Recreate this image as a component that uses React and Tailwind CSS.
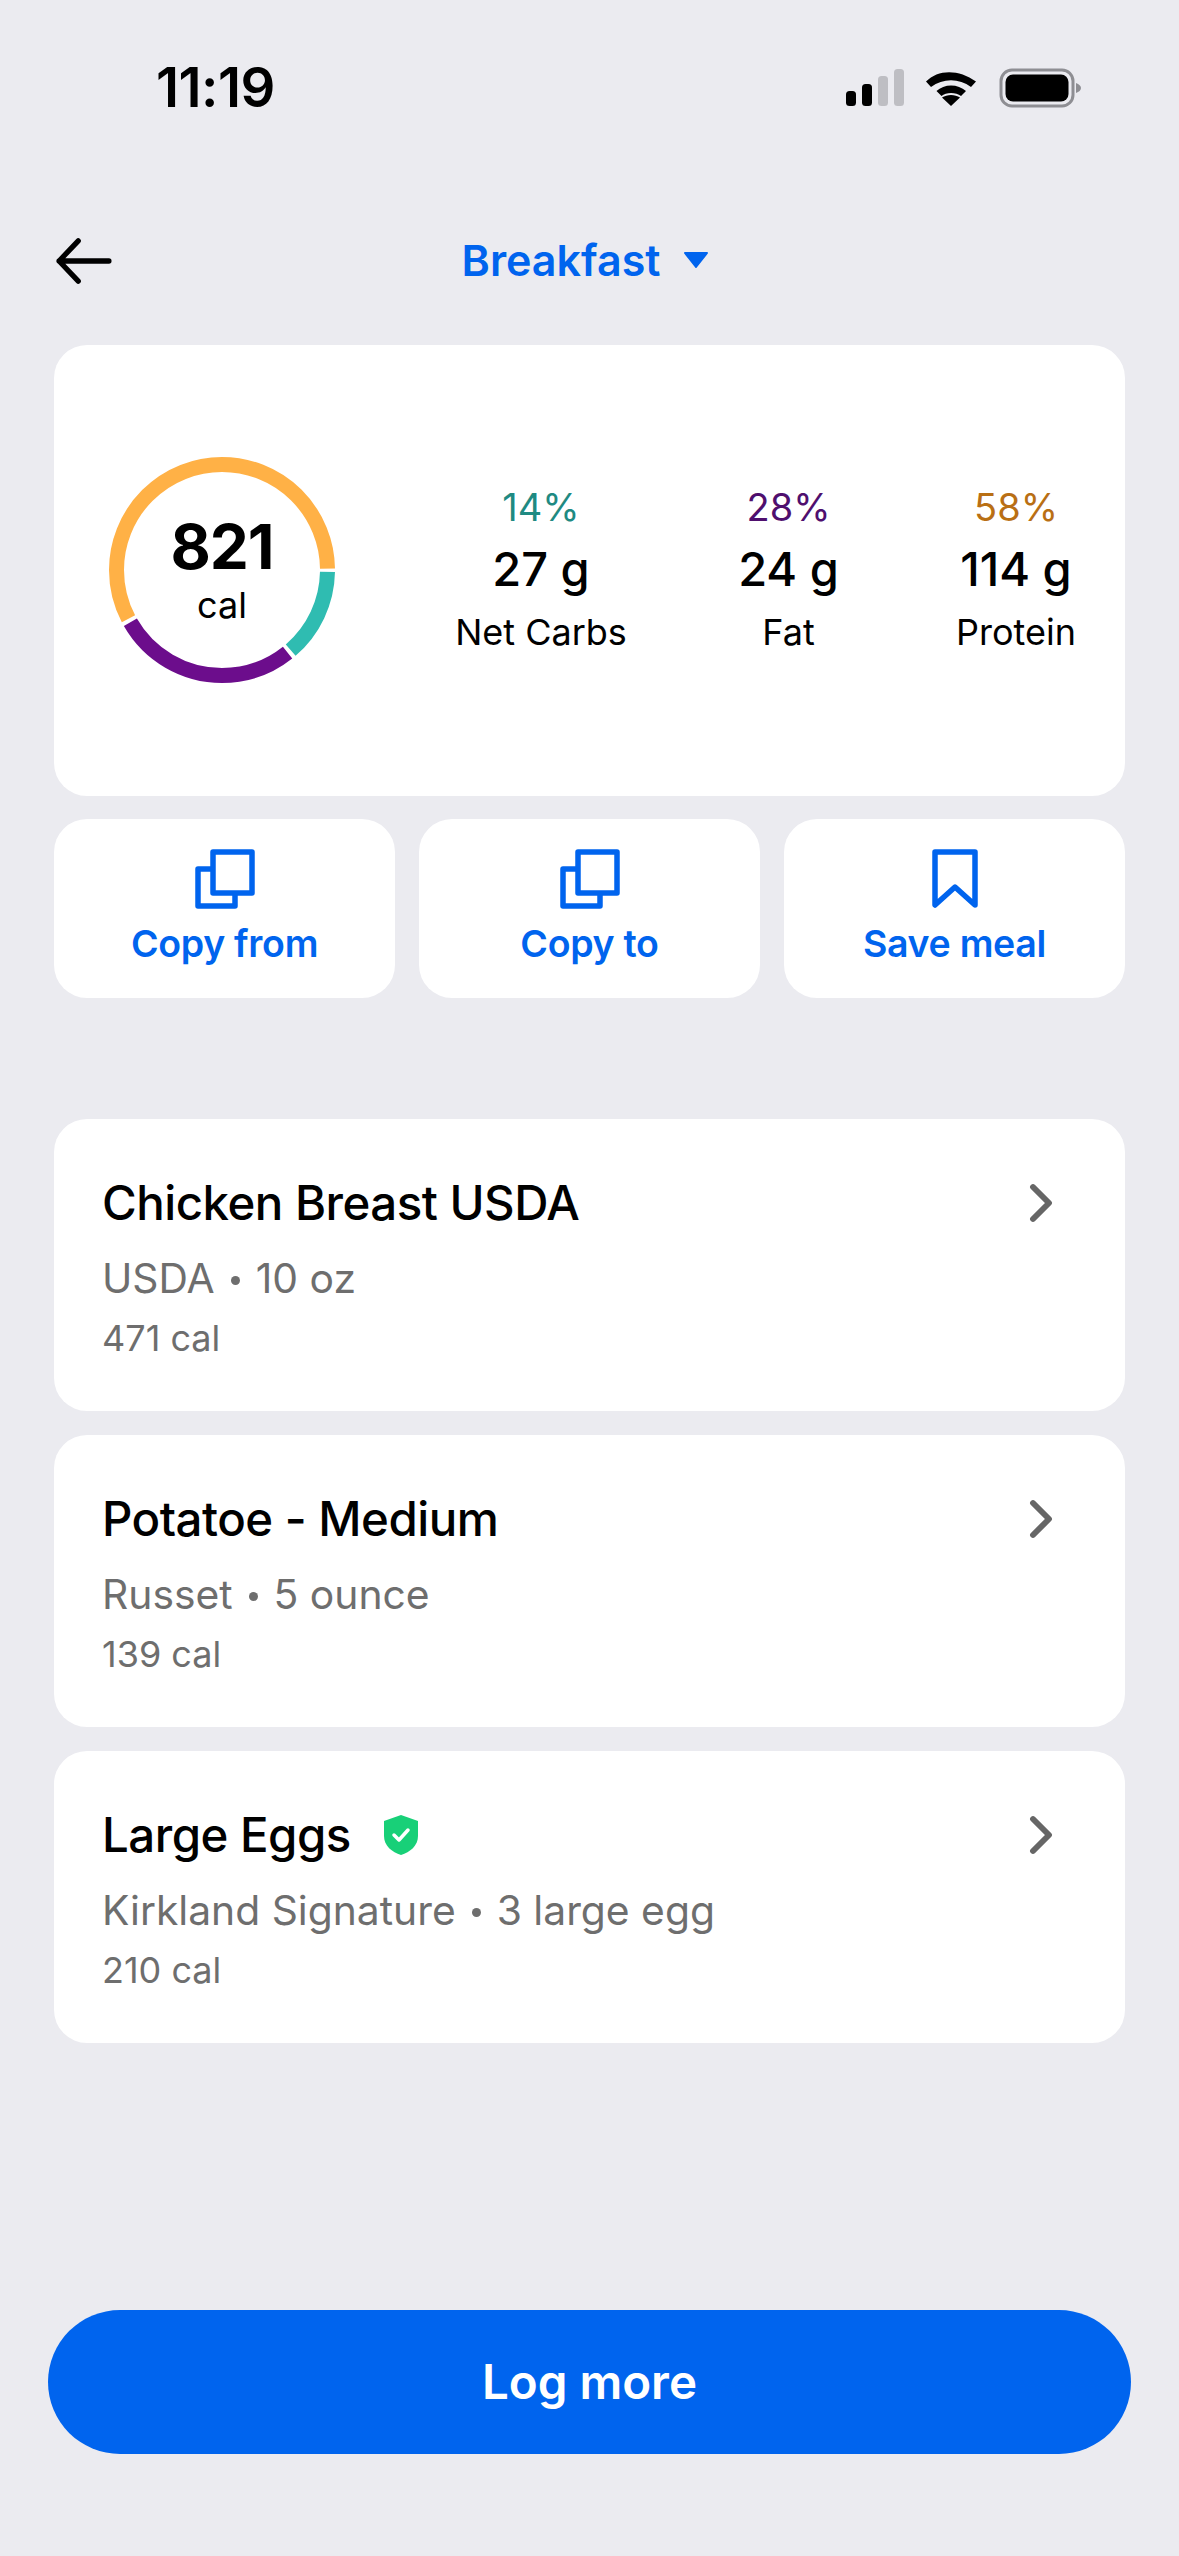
import { ChevronRight } from 'lucide-react';

const macros = [
  { pct: '14%', grams: '27 g', label: 'Net Carbs', color: 'text-[#1f8a82]', width: 'w-[170px]' },
  { pct: '28%', grams: '24 g', label: 'Fat', color: 'text-[#4f0f6e]', width: 'w-[120px]' },
  { pct: '58%', grams: '114 g', label: 'Protein', color: 'text-[#b96f14]', width: 'w-[130px]' },
];

const foods = [
  { name: 'Chicken Breast USDA', brand: 'USDA', amount: '10 oz', cal: '471 cal' },
  { name: 'Potatoe - Medium', brand: 'Russet', amount: '5 ounce', cal: '139 cal' },
  { name: 'Large Eggs', brand: 'Kirkland Signature', amount: '3 large egg', cal: '210 cal', verified: true },
];

function StatusIcons() {
  return (
    <svg width="236" height="40" viewBox="0 0 236 40" fill="none">
      <rect x="0" y="23" width="10" height="15" rx="3.5" fill="#000" />
      <rect x="16" y="16" width="10" height="22" rx="3.5" fill="#000" />
      <rect x="32" y="8" width="10" height="30" rx="3.5" fill="#bebec3" />
      <rect x="48" y="1" width="10" height="37" rx="3.5" fill="#bebec3" />
      <path d="M80 14.5C92 2 113 2 130 14.5L125 20C113 11 97 11 85 20Z" fill="#000" transform="translate(0 -1)" />
      <path d="M90.5 24C98 16.5 112 16.5 120 24L115 29C110 25 100 25 95.500 29Z" fill="#000" transform="translate(0 -1)" />
      <path d="M105 38L96 29.500C101 26 109 26 114 29.500Z" fill="#000" />
      <rect x="155" y="2" width="72" height="36" rx="11" stroke="#8e8e93" strokeWidth="3" />
      <rect x="159.500" y="6.500" width="63" height="27" rx="7.500" fill="#000" />
      <path d="M230 15C233 16 235 18 235 20C235 22 233 24 230 25Z" fill="#8e8e93" />
    </svg>
  );
}

function Ring() {
  const size = 226;
  const r = 105.5;
  const c = 2 * Math.PI * r;
  const segs = [
    { color: '#2fbcb1', start: 0, share: 0.14 },
    { color: '#6c0d8c', start: 0.14, share: 0.28 },
    { color: '#ffb146', start: 0.42, share: 0.58 },
  ];
  return (
    <div className="relative w-[226px] h-[226px] shrink-0 mt-[-2px]">
      <svg width={size} height={size} viewBox="0 0 226 226">
        {segs.map(s => (
          <circle
            key={s.color}
            cx="113"
            cy="113"
            r={r}
            fill="none"
            stroke={s.color}
            strokeWidth="15"
            strokeDasharray={`${s.share * c - 4} ${c}`}
            strokeDashoffset={-(s.start * c + 2)}
          />
        ))}
      </svg>
      <div className="absolute inset-0 flex flex-col items-center justify-center">
        <span className="text-[62px] leading-[66px] font-bold tracking-[-1px] mt-[-1px]">821</span>
        <span className="text-[36px] leading-[40px] mt-[5px]">cal</span>
      </div>
    </div>
  );
}

function CopyIcon() {
  return (
    <svg width="60" height="60" viewBox="0 0 60 60" fill="none" stroke="#0064ee" strokeWidth="5.500" strokeLinejoin="round">
      <rect x="18" y="3" width="39" height="41" />
      <path d="M18 20H3V57H40V44" />
    </svg>
  );
}

function BookmarkIcon() {
  return (
    <svg width="46" height="60" viewBox="0 0 46 60" fill="none" stroke="#0064ee" strokeWidth="5.500" strokeLinejoin="round">
      <path d="M3 3H43V56L23 38L3 56Z" />
    </svg>
  );
}

function ActionButton({ icon, label }) {
  return (
    <button className="flex-1 h-[179px] bg-white rounded-[33px] flex flex-col items-center pt-[30px]">
      <div className="h-[60px] flex items-center">{icon}</div>
      <span className="mt-[13px] text-[37.5px] leading-[44px] font-semibold text-[#0064ee] tracking-[-0.3px]">{label}</span>
    </button>
  );
}

function FoodRow({ food }) {
  return (
    <div className="h-[292px] bg-white rounded-[33px] pl-[48px] pr-[60px] pt-[54px] flex justify-between items-start">
      <div>
        <div className="flex items-center gap-[32px] h-[60px]">
          <span className="text-[47.4px] leading-[60px] font-medium tracking-[-0.5px] text-black">{food.name}</span>
          {food.verified && (
            <svg width="36" height="40" viewBox="0 0 36 40">
              <path d="M18 0L35 6V21C35 31 27 37 18 40C9 37 1 31 1 21V6Z" fill="#18d078" />
              <path d="M11 20L16 25L25 15" fill="none" stroke="#fff" strokeWidth="3.500" strokeLinecap="round" strokeLinejoin="round" />
            </svg>
          )}
        </div>
        <div className="mt-[21px] text-[40.8px] leading-[48px] text-[#6e6e6e] flex items-center">
          <span>{food.brand}</span>
          <span className="w-[9px] h-[9px] rounded-full bg-[#6e6e6e] mx-[16px] mt-[4px]" />
          <span>{food.amount}</span>
        </div>
        <div className="mt-[14px] text-[36px] leading-[44px] text-[#6e6e6e]">{food.cal}</div>
      </div>
      <ChevronRight size={64} strokeWidth={2.2} className="text-[#666666] mr-[-8px] mt-[-2px]" />
    </div>
  );
}

export default function App() {
  return (
    <div className="w-[1179px] h-[2556px] bg-[#ebebf0] flex flex-col font-['Inter',sans-serif] text-black overflow-hidden">
      {/* status bar */}
      <div className="h-[174px] pl-[156px] pr-[97px] pt-[58px] flex justify-between items-start">
        <span className="text-[54.5px] leading-[58px] font-semibold tracking-[-0.5px]">11:19</span>
        <div className="pt-[10px]"><StatusIcons /></div>
      </div>

      {/* nav */}
      <div className="relative h-[171px] flex items-start justify-center pt-[61px]">
        <div className="absolute left-[56px] top-[64px]">
          <svg width="56" height="46" viewBox="0 0 58 48" fill="none" stroke="#000" strokeWidth="5.500" strokeLinecap="round" strokeLinejoin="round">
            <path d="M55 24H3M23 3L3 24L23 45" />
          </svg>
        </div>
        <div className="flex items-center gap-[23px] h-[52px] mt-[-1px] pr-[8px]">
          <span className="text-[43px] leading-[52px] font-semibold text-[#0064ee]">Breakfast</span>
          <svg width="26" height="16" viewBox="0 0 26 16">
            <path d="M2 1H24L13 15Z" fill="#0064ee" stroke="#0064ee" strokeWidth="2" strokeLinejoin="round" />
          </svg>
        </div>
      </div>

      <div className="px-[54px] flex flex-col">
        {/* summary */}
        <div className="h-[451px] bg-white rounded-[33px] flex items-center pl-[55px]">
          <Ring />
          <div className="flex-1 flex items-center pl-[121px] pr-[44px] justify-between mt-[-3px]">
            {macros.map(m => (
              <div key={m.label} className={`${m.width} flex flex-col items-center whitespace-nowrap`}>
                <span className={`text-[38px] leading-[44px] ${m.color}`}>{m.pct}</span>
                <span className="text-[47px] leading-[60px] font-medium mt-[10px]">{m.grams}</span>
                <span className="text-[36px] leading-[44px] mt-[11px]">{m.label}</span>
              </div>
            ))}
          </div>
        </div>

        {/* actions */}
        <div className="flex gap-[24px] mt-[23px]">
          <ActionButton icon={<CopyIcon />} label="Copy from" />
          <ActionButton icon={<CopyIcon />} label="Copy to" />
          <ActionButton icon={<BookmarkIcon />} label="Save meal" />
        </div>

        {/* foods */}
        <div className="flex flex-col gap-[24px] mt-[121px]">
          {foods.map(f => <FoodRow key={f.name} food={f} />)}
        </div>
      </div>

      <div className="mt-auto px-[48px] pb-[102px]">
        <button className="w-full h-[144px] rounded-[72px] bg-[#0064ee] text-white text-[47.5px] font-semibold">Log more</button>
      </div>
    </div>
  );
}
